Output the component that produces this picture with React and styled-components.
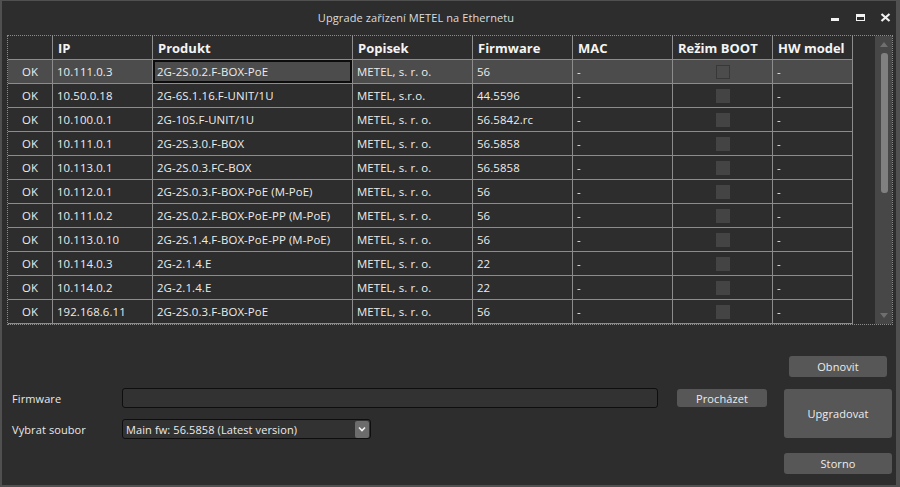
import React from "react";
import styled, { createGlobalStyle } from "styled-components";

const GlobalStyle = createGlobalStyle`
  html, body {
    margin: 0;
    padding: 0;
    background: #2d2d2d;
  }
  body {
    font-family: "Open Sans", "Segoe UI", sans-serif;
  }
`;

const Window = styled.div`
  width: 900px;
  height: 487px;
  box-sizing: border-box;
  background: #2d2d2d;
  border-style: solid;
  border-color: #505050;
  border-width: 1px 4px 2px 2px;
  display: flex;
  flex-direction: column;
  color: #e8e8e8;
  font-size: 11px;
  letter-spacing: 0.1px;
`;

const TitleBar = styled.div`
  height: 34px;
  display: flex;
  align-items: center;
  padding-bottom: 1px;
  box-sizing: border-box;
`;

const Title = styled.div`
  flex: 1;
  text-align: center;
  color: #dcdcdc;
  font-size: 11px;
`;

const Controls = styled.div`
  display: flex;
  align-items: center;
  gap: 14px;
  margin-right: 5px;
`;

const TableFrame = styled.div`
  margin: 0 3px 0 5px;
  height: 290px;
  box-sizing: border-box;
  border: 1px dotted #8c8c8c;
  display: flex;
`;

const Grid = styled.div`
  width: 845px;
  display: flex;
  flex-direction: column;
`;

const Row = styled.div`
  display: grid;
  grid-template-columns: 45px 100px 200px 120px 100px 100px 100px 80px;
  height: 24px;
  background: ${(p) => (p.$selected ? "#4c4c4c" : "transparent")};
`;

const Cell = styled.div`
  box-sizing: border-box;
  border-right: 1px solid #8c8c8c;
  border-bottom: 1px solid #8c8c8c;
  padding-left: ${(p) => (p.$center ? "0" : "4px")};
  display: flex;
  align-items: center;
  justify-content: ${(p) => (p.$center ? "center" : "flex-start")};
  white-space: nowrap;
  overflow: hidden;
  font-size: 11.4px;
  color: #ececec;
  box-shadow: ${(p) => (p.$focused ? "inset 0 0 0 2px #0c0c0c" : "none")};
`;

const HeadCell = styled(Cell)`
  font-weight: 700;
  font-size: 13px;
  letter-spacing: 0;
  color: #f4f4f4;
  padding-left: 5px;
`;

const Check = styled.span`
  width: 14px;
  height: 14px;
  box-sizing: border-box;
  background: ${(p) => (p.$selected ? "#4c4c4c" : "#444444")};
  border: 1px solid ${(p) => (p.$selected ? "#383838" : "#444444")};
`;

const Spacer = styled.div`
  width: 22px;
`;

const ScrollBar = styled.div`
  width: 17px;
  background: #474747;
  display: flex;
  flex-direction: column;
  align-items: center;
`;

const ArrowBox = styled.div`
  height: 17px;
  width: 100%;
  display: flex;
  align-items: center;
  justify-content: center;
`;

const Thumb = styled.div`
  width: 7px;
  height: 140px;
  margin-left: 1px;
  border-radius: 3px;
  background: #808080;
`;

const Fill = styled.div`
  flex: 1;
`;

const Bottom = styled.div`
  margin-top: 31px;
  padding: 0 4px 0 10px;
  display: grid;
  grid-template-columns: 110px 536px 1fr 108px;
  grid-template-rows: 21px 20px 20px 21px;
  row-gap: 11px;
`;

const Label = styled.div`
  grid-column: 1;
  grid-row: ${(p) => p.$row};
  display: flex;
  align-items: center;
  color: #e8e8e8;
`;

const TextInput = styled.div`
  grid-column: 2;
  grid-row: 2;
  box-sizing: border-box;
  border: 1px solid #0e0e0e;
  border-radius: 3px;
  background: #323232;
`;

const Select = styled.div`
  grid-column: 2;
  grid-row: 3;
  width: 249px;
  box-sizing: border-box;
  border: 1px solid #0e0e0e;
  border-radius: 3px;
  background: #323232;
  display: flex;
  align-items: center;
  justify-content: space-between;
  padding: 0 1px 0 3px;
  color: #ececec;
`;

const SelectArrow = styled.div`
  width: 14px;
  height: 17px;
  border-radius: 2px;
  background: #6c6c6c;
  display: flex;
  align-items: center;
  justify-content: center;
`;

const Button = styled.div`
  box-sizing: border-box;
  border-radius: 3px;
  background: #575757;
  color: #ededed;
  display: flex;
  align-items: center;
  justify-content: center;
`;

const RefreshButton = styled(Button)`
  grid-column: 4;
  grid-row: 1;
  margin: 0 5px;
`;

const BrowseButton = styled(Button)`
  grid-column: 3;
  grid-row: 2;
  width: 90px;
  height: 18px;
  justify-self: center;
  margin-top: 1px;
  margin-left: 2px;
`;

const UpgradeButton = styled(Button)`
  grid-column: 4;
  grid-row: 2 / span 2;
  margin: 1px 0;
`;

const CancelButton = styled(Button)`
  grid-column: 4;
  grid-row: 4;
  margin-top: 3px;
  height: 21px;
`;

const headers = ["", "IP", "Produkt", "Popisek", "Firmware", "MAC", "Režim BOOT", "HW model"];

const devices = [
  ["10.111.0.3", "2G-2S.0.2.F-BOX-PoE", "METEL, s. r. o.", "56"],
  ["10.50.0.18", "2G-6S.1.16.F-UNIT/1U", "METEL, s.r.o.", "44.5596"],
  ["10.100.0.1", "2G-10S.F-UNIT/1U", "METEL, s. r. o.", "56.5842.rc"],
  ["10.111.0.1", "2G-2S.3.0.F-BOX", "METEL, s. r. o.", "56.5858"],
  ["10.113.0.1", "2G-2S.0.3.FC-BOX", "METEL, s. r. o.", "56.5858"],
  ["10.112.0.1", "2G-2S.0.3.F-BOX-PoE (M-PoE)", "METEL, s. r. o.", "56"],
  ["10.111.0.2", "2G-2S.0.2.F-BOX-PoE-PP (M-PoE)", "METEL, s. r. o.", "56"],
  ["10.113.0.10", "2G-2S.1.4.F-BOX-PoE-PP (M-PoE)", "METEL, s. r. o.", "56"],
  ["10.114.0.3", "2G-2.1.4.E", "METEL, s. r. o.", "22"],
  ["10.114.0.2", "2G-2.1.4.E", "METEL, s. r. o.", "22"],
  ["192.168.6.11", "2G-2S.0.3.F-BOX-PoE", "METEL, s. r. o.", "56"],
];

function WindowControls() {
  return (
    <Controls>
      <svg width="11" height="9" viewBox="0 0 11 9">
        <rect x="1" y="5" width="8" height="3" fill="#f2f2f2" />
      </svg>
      <svg width="11" height="9" viewBox="0 0 11 9">
        <rect x="1" y="1" width="9" height="7" fill="#f2f2f2" />
        <rect x="2" y="4" width="7" height="3" fill="#2d2d2d" />
      </svg>
      <svg width="11" height="9" viewBox="0 0 11 9">
        <path d="M1.5 1 L9.5 8 M9.5 1 L1.5 8" stroke="#f2f2f2" strokeWidth="2.2" />
      </svg>
    </Controls>
  );
}

export default function App() {
  return (
    <>
      <GlobalStyle />
      <Window>
        <TitleBar>
          <Title>Upgrade zařízení METEL na Ethernetu</Title>
          <WindowControls />
        </TitleBar>
        <TableFrame>
          <Grid>
            <Row>
              {headers.map((h, i) => (
                <HeadCell key={i}>{h}</HeadCell>
              ))}
            </Row>
            {devices.map((d, i) => (
              <Row key={d[0]} $selected={i === 0}>
                <Cell $center>OK</Cell>
                <Cell>{d[0]}</Cell>
                <Cell $focused={i === 0}>{d[1]}</Cell>
                <Cell>{d[2]}</Cell>
                <Cell>{d[3]}</Cell>
                <Cell>-</Cell>
                <Cell $center>
                  <Check $selected={i === 0} />
                </Cell>
                <Cell>-</Cell>
              </Row>
            ))}
          </Grid>
          <Spacer />
          <ScrollBar>
            <ArrowBox>
              <svg width="8" height="5" viewBox="0 0 8 5">
                <path d="M0 5 L4 0 L8 5 Z" fill="#6f6f6f" />
              </svg>
            </ArrowBox>
            <Thumb />
            <Fill />
            <ArrowBox>
              <svg width="8" height="5" viewBox="0 0 8 5">
                <path d="M0 0 L8 0 L4 5 Z" fill="#6f6f6f" />
              </svg>
            </ArrowBox>
          </ScrollBar>
        </TableFrame>
        <Bottom>
          <RefreshButton>Obnovit</RefreshButton>
          <Label $row={2}>Firmware</Label>
          <TextInput />
          <BrowseButton>Procházet</BrowseButton>
          <UpgradeButton>Upgradovat</UpgradeButton>
          <Label $row={3}>Vybrat soubor</Label>
          <Select>
            <span>Main fw: 56.5858 (Latest version)</span>
            <SelectArrow>
              <svg width="8" height="6" viewBox="0 0 8 6">
                <path d="M1 1.5 L4 4.5 L7 1.5" stroke="#f4f4f4" strokeWidth="1.6" fill="none" />
              </svg>
            </SelectArrow>
          </Select>
          <CancelButton>Storno</CancelButton>
        </Bottom>
      </Window>
    </>
  );
}
